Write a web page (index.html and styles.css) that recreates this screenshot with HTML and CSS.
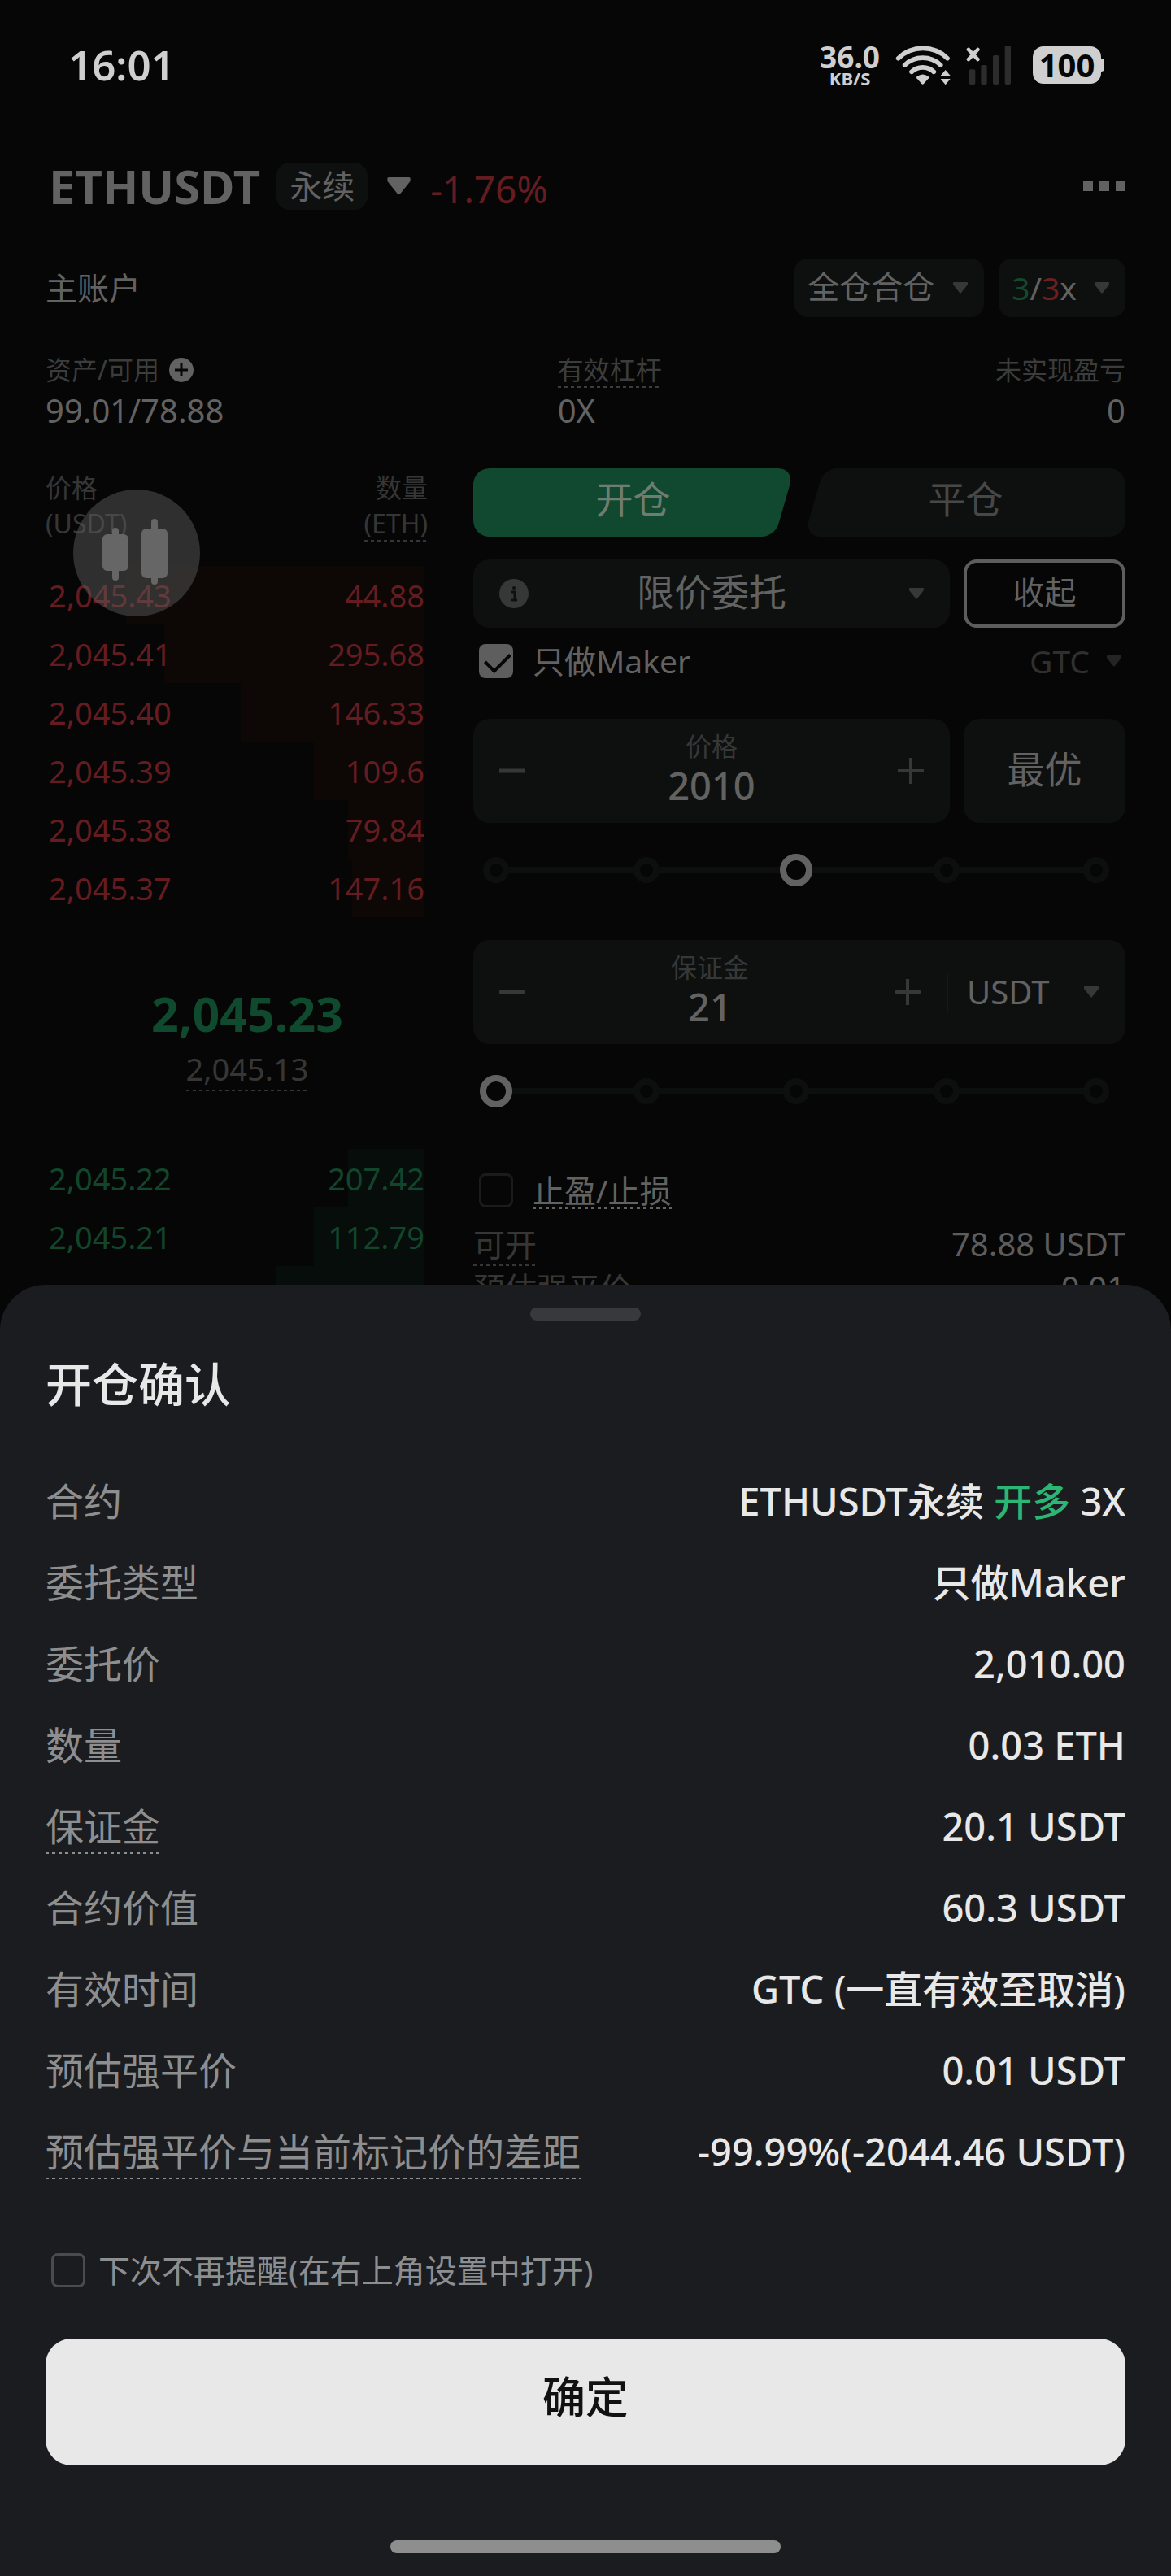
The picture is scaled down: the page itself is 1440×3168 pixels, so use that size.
FILE: index.html
```
<!DOCTYPE html>
<html lang="zh-CN">
<head>
    <meta charset="UTF-8">
    <meta name="viewport" content="width=device-width, initial-scale=1.0">
    <title>ETHUSDT 永续</title>
    <link rel="stylesheet" href="styles.css">
</head>
<body>
    <svg class="defs" aria-hidden="true">
        <symbol id="caret" viewBox="0 0 18 14">
            <path d="M1 0H17Q18 0 18 1V3L10 13Q9 14 8 13L0 3V1Q0 0 1 0Z" fill="currentColor"/>
        </symbol>
        <symbol id="minus" viewBox="0 0 32 32">
            <path d="M0 16H32" stroke="currentColor" stroke-width="5"/>
        </symbol>
        <symbol id="plus" viewBox="0 0 32 32">
            <path d="M0 16H32M16 0V32" stroke="currentColor" stroke-width="4"/>
        </symbol>
    </svg>

    <div class="app">
        <main class="trade">
            <div class="status-bar">
                <span class="time">16:01</span>
                <div class="status-icons">
                    <div class="speed"><b>36.0</b><small>KB/S</small></div>
                    <svg class="wifi" viewBox="0 0 210 153" aria-hidden="true">
                        <g fill="none" stroke="currentColor" stroke-width="17" stroke-linecap="round">
                            <path d="M14 50A130 130 0 0 1 195 50"/>
                            <path d="M38 75A95 95 0 0 1 170 75"/>
                            <path d="M63 100A60 60 0 0 1 145 100"/>
                        </g>
                        <path d="M83 117Q104 102 125 117Q129 120 126 124L108 144Q104 148 100 144L82 124Q79 120 83 117Z" fill="currentColor"/>
                        <path d="M188 93L206 114H170ZM170 126H206L188 148Z" fill="currentColor"/>
                    </svg>
                    <svg class="signal" viewBox="0 0 168 150" aria-hidden="true">
                        <path d="M9 18L43 54M43 18L9 54" stroke="currentColor" stroke-width="14" stroke-linecap="round"/>
                        <g fill="#2c2c2c">
                            <rect x="11" y="91" width="23" height="56" rx="6"/>
                            <rect x="55" y="75" width="22" height="72" rx="6"/>
                            <rect x="99" y="39" width="22" height="108" rx="6"/>
                            <rect x="143" y="3" width="22" height="144" rx="6"/>
                        </g>
                    </svg>
                    <div class="battery">100</div>
                </div>
            </div>

            <header class="pair">
                <h1>ETHUSDT</h1>
                <span class="tag">永续</span>
                <svg class="pair-caret" aria-hidden="true"><use href="#caret"/></svg>
                <span class="change">-1.76%</span>
                <button class="more" type="button" aria-label="更多"><i></i><i></i><i></i></button>
            </header>

            <section class="account">
                <span>主账户</span>
                <div class="chips">
                    <label class="chip">
                        <select aria-label="保证金模式"><option>全仓合仓</option></select>
                        <svg class="caret" aria-hidden="true"><use href="#caret"/></svg>
                    </label>
                    <button class="chip" type="button">
                        <span><span class="long">3</span>/<span class="short">3</span>x</span>
                        <svg class="caret" aria-hidden="true"><use href="#caret"/></svg>
                    </button>
                </div>
            </section>

            <section class="stats">
                <div>
                    <div class="stat-label">资产/可用
                        <svg class="add" viewBox="0 0 30 30" aria-hidden="true">
                            <circle cx="15" cy="15" r="15" fill="#626262"/>
                            <path d="M7 15H23M15 7V23" stroke="#060606" stroke-width="3"/>
                        </svg>
                    </div>
                    <div class="stat-value">99.01/78.88</div>
                </div>
                <div>
                    <div class="stat-label"><span class="dashed">有效杠杆</span></div>
                    <div class="stat-value">0X</div>
                </div>
                <div class="right">
                    <div class="stat-label">未实现盈亏</div>
                    <div class="stat-value">0</div>
                </div>
            </section>

            <div class="columns">
                <section class="book">
                    <table class="asks">
                        <thead>
                            <tr><th>价格<br>(USDT)</th><th>数量<br><span class="dashed">(ETH)</span></th></tr>
                        </thead>
                        <tbody>
                            <tr style="--depth: 78%"><td>2,045.43</td><td>44.88</td></tr>
                            <tr style="--depth: 68%"><td>2,045.41</td><td>295.68</td></tr>
                            <tr style="--depth: 48%"><td>2,045.40</td><td>146.33</td></tr>
                            <tr style="--depth: 29%"><td>2,045.39</td><td>109.6</td></tr>
                            <tr style="--depth: 20%"><td>2,045.38</td><td>79.84</td></tr>
                            <tr style="--depth: 19%"><td>2,045.37</td><td>147.16</td></tr>
                        </tbody>
                    </table>
                    <div class="last">
                        <strong>2,045.23</strong>
                        <span class="dashed">2,045.13</span>
                    </div>
                    <table class="bids">
                        <tbody>
                            <tr style="--depth: 20%"><td>2,045.22</td><td>207.42</td></tr>
                            <tr style="--depth: 29%"><td>2,045.21</td><td>112.79</td></tr>
                            <tr style="--depth: 39%"><td>2,045.20</td><td>140.44</td></tr>
                        </tbody>
                    </table>
                    <button class="chart-button" type="button" aria-label="K线">
                        <svg viewBox="0 0 156 156" aria-hidden="true">
                            <g fill="#666">
                                <rect x="36" y="55" width="32" height="45" rx="6"/>
                                <rect x="48" y="47" width="8" height="65" rx="4"/>
                                <rect x="84" y="48" width="32" height="61" rx="6"/>
                                <rect x="96" y="36" width="8" height="81" rx="4"/>
                            </g>
                        </svg>
                    </button>
                </section>

                <form class="order">
                    <div class="tabs">
                        <button class="tab open" type="button">开仓</button>
                        <button class="tab close" type="button">平仓</button>
                    </div>

                    <div class="row type-row">
                        <label class="field type">
                            <svg class="info" viewBox="0 0 36 36" aria-hidden="true">
                                <circle cx="18" cy="18" r="18" fill="#363837"/>
                                <circle cx="18" cy="11" r="2" fill="#0e100f"/>
                                <path d="M15 16H19V26M15 26H22" fill="none" stroke="#0e100f" stroke-width="3"/>
                            </svg>
                            <select aria-label="委托类型"><option>限价委托</option></select>
                            <svg class="caret" aria-hidden="true"><use href="#caret"/></svg>
                        </label>
                        <button class="fold" type="button">收起</button>
                    </div>

                    <div class="check-row">
                        <input type="checkbox" id="maker" checked>
                        <label for="maker">只做Maker</label>
                        <label class="tif">
                            <select aria-label="有效时间"><option>GTC</option></select>
                            <svg class="caret" aria-hidden="true"><use href="#caret"/></svg>
                        </label>
                    </div>

                    <div class="row amount-row">
                        <div class="field amount">
                            <button type="button" aria-label="减少价格"><svg><use href="#minus"/></svg></button>
                            <div class="amount-text">
                                <label for="price">价格</label>
                                <input type="text" id="price" value="2010">
                            </div>
                            <button type="button" aria-label="增加价格"><svg><use href="#plus"/></svg></button>
                        </div>
                        <button class="field best" type="button">最优</button>
                    </div>
                    <div class="slider">
                        <i></i><i></i><i></i><i></i><i></i>
                        <input type="range" min="0" max="100" value="50" aria-label="价格比例">
                    </div>

                    <div class="field margin">
                        <div class="amount">
                            <button type="button" aria-label="减少保证金"><svg><use href="#minus"/></svg></button>
                            <div class="amount-text">
                                <label for="margin">保证金</label>
                                <input type="text" id="margin" value="21">
                            </div>
                            <button type="button" aria-label="增加保证金"><svg><use href="#plus"/></svg></button>
                        </div>
                        <label class="unit">
                            <select aria-label="单位"><option>USDT</option></select>
                            <svg class="caret" aria-hidden="true"><use href="#caret"/></svg>
                        </label>
                    </div>
                    <div class="slider">
                        <i></i><i></i><i></i><i></i><i></i>
                        <input type="range" min="0" max="100" value="0" aria-label="保证金比例">
                    </div>

                    <div class="check-row tpsl">
                        <input type="checkbox" id="tpsl">
                        <label for="tpsl" class="dashed">止盈/止损</label>
                    </div>
                    <div class="info-row"><span class="dashed">可开</span><b>78.88 USDT</b></div>
                    <div class="info-row"><span class="dashed">预估强平价</span><b>0.01</b></div>
                </form>
            </div>
        </main>

        <section class="sheet" role="dialog" aria-labelledby="sheet-title">
            <div class="handle"></div>
            <h2 id="sheet-title">开仓确认</h2>
            <dl>
                <div><dt>合约</dt><dd>ETHUSDT永续 <span class="buy">开多</span> 3X</dd></div>
                <div><dt>委托类型</dt><dd>只做Maker</dd></div>
                <div><dt>委托价</dt><dd>2,010.00</dd></div>
                <div><dt>数量</dt><dd>0.03 ETH</dd></div>
                <div><dt class="dashed">保证金</dt><dd>20.1 USDT</dd></div>
                <div><dt>合约价值</dt><dd>60.3 USDT</dd></div>
                <div><dt>有效时间</dt><dd>GTC (一直有效至取消)</dd></div>
                <div><dt>预估强平价</dt><dd>0.01 USDT</dd></div>
                <div><dt class="dashed">预估强平价与当前标记价的差距</dt><dd>-99.99%(-2044.46 USDT)</dd></div>
            </dl>
            <div class="remind">
                <input type="checkbox" id="remind">
                <label for="remind">下次不再提醒(在右上角设置中打开)</label>
            </div>
            <button class="confirm" type="button">确定</button>
            <div class="home-bar"></div>
        </section>
    </div>
</body>
</html>
```

FILE: styles.css
```
* {
    box-sizing: border-box;
}

body {
    margin: 0;
    background: #060606;
    color: #626262;
    font-family: "Noto Sans", "Noto Sans CJK SC", sans-serif;
    font-size: 39px;
    line-height: 1.2;
}

button,
input,
select {
    margin: 0;
    padding: 0;
    border: 0;
    background: none;
    color: inherit;
    font: inherit;
    appearance: none;
    outline: none;
}

button,
select {
    cursor: pointer;
}

svg {
    display: block;
    flex: none;
}

.defs {
    display: none;
}

/* the sheet shares one grid cell with the trade screen and sits on its bottom edge */
.app {
    display: grid;
    grid-template-columns: 100%;
    min-height: 100vh;
}

.trade,
.sheet {
    grid-area: 1 / 1;
}

.trade {
    padding: 0 56px;
}

.caret {
    width: 18px;
    height: 14px;
    color: #363837;
}

.dashed {
    background: repeating-linear-gradient(90deg, currentColor 0 4px, transparent 4px 8px) left bottom / 100% 2px no-repeat;
}

.long {
    color: #12492f;
}

.short {
    color: #6e1f1f;
}

.right {
    text-align: right;
}

/* Status bar */
.status-bar {
    display: flex;
    align-items: center;
    justify-content: space-between;
    height: 160px;
    padding: 0 26px 0 28px;
    color: #cfcfcf;
}

.time {
    font-size: 51px;
    font-weight: 600;
}

.status-icons {
    display: flex;
    align-items: center;
    gap: 18px;
}

.speed {
    text-align: center;
}

.speed b,
.speed small {
    display: block;
    font-weight: 700;
}

.speed b {
    font-size: 37px;
    line-height: 32px;
}

.speed small {
    font-size: 22px;
    line-height: 20px;
}

.wifi {
    width: 70px;
    height: 51px;
}

.signal {
    width: 56px;
    height: 50px;
}

.battery {
    position: relative;
    margin: 0 4px 0 8px;
    width: 84px;
    height: 46px;
    border-radius: 13px;
    background: #cfcfcf;
    color: #060606;
    font-size: 40px;
    font-weight: 700;
    line-height: 46px;
    text-align: center;
}

.battery::after {
    content: "";
    position: absolute;
    left: 100%;
    top: 15px;
    width: 4px;
    height: 16px;
    border-radius: 0 4px 4px 0;
    background: #cfcfcf;
}

/* Pair header */
.pair {
    display: flex;
    align-items: center;
    height: 72px;
    margin-top: 33px;
    padding-left: 4px;
}

.pair h1 {
    margin: 0;
    font-size: 58px;
    font-weight: 700;
    line-height: 72px;
}

.tag {
    margin-left: 20px;
    padding: 0 16px;
    border-radius: 16px;
    background: #0e100f;
    font-size: 40px;
    line-height: 58px;
}

.pair-caret {
    width: 29px;
    height: 22px;
    margin: 0 24px;
}

.change {
    padding-top: 8px;
    color: #651c20;
    font-size: 46px;
}

.more {
    display: flex;
    gap: 8px;
    margin-left: auto;
    padding: 16px 0;
}

.more i {
    width: 12px;
    height: 12px;
    background: #626262;
}

/* Account */
.account {
    display: flex;
    align-items: center;
    justify-content: space-between;
    margin-top: 53px;
}

.chips {
    display: flex;
    gap: 18px;
}

.chip {
    display: flex;
    align-items: center;
    gap: 22px;
    height: 72px;
    padding: 0 20px 0 16px;
    border-radius: 16px;
    background: #0e100f;
}

.chip select {
    padding-bottom: 4px;
}

.stats {
    display: flex;
    justify-content: space-between;
    margin-top: 43px;
}

.stat-label {
    display: flex;
    align-items: center;
    gap: 12px;
    color: #3b3d3c;
    font-size: 32px;
    line-height: 44px;
}

.add {
    width: 30px;
    height: 30px;
}

.stat-value {
    font-size: 40px;
    line-height: 56px;
}

/* Order book */
.columns {
    display: grid;
    grid-template-columns: 496fr 802fr;
    gap: 30px;
    margin-top: 43px;
}

.book {
    position: relative;
    font-size: 38px;
}

.book table {
    width: calc(100% - 26px);
    border-spacing: 0;
}

.book th {
    padding: 2px 0 30px;
    color: #363636;
    font-size: 32px;
    font-weight: 400;
    line-height: 44px;
    text-align: left;
}

.book th .dashed {
    display: inline-block;
}

.book td {
    height: 72px;
    padding: 2px 4px 0;
}

.book th:last-child,
.book td:last-child {
    text-align: right;
}

.book tbody tr {
    background: linear-gradient(var(--bar), var(--bar)) right 4px top / var(--depth) 100% no-repeat;
}

.asks {
    --bar: #0d0706;
}

.asks td {
    color: #651c20;
}

.bids {
    --bar: #060d0a;
}

.bids td {
    color: #12462c;
}

.last {
    display: flex;
    flex-direction: column;
    align-items: center;
    gap: 4px;
    padding: 82px 0 71px;
}

.last strong {
    color: #104a2e;
    font-size: 59px;
    font-weight: 700;
    line-height: 72px;
}

.last .dashed {
    color: #363636;
    line-height: 56px;
}

.chart-button {
    position: absolute;
    left: 34px;
    top: 26px;
    width: 156px;
    height: 156px;
    border-radius: 50%;
    background: rgba(92, 92, 92, 0.48);
}

/* Order form */
.tabs {
    display: flex;
    gap: 16px;
}

.tab {
    position: relative;
    z-index: 0;
    flex: 1;
    height: 84px;
    padding-bottom: 8px;
    font-size: 46px;
}

/* a straight outer half plus a skewed inner part */
.tab::before,
.tab::after {
    content: "";
    position: absolute;
    z-index: -1;
    top: 0;
    bottom: 0;
    background: var(--tab);
}

.open {
    --tab: #10492f;
    color: #6f7c70;
}

.open::before {
    left: 0;
    right: 50%;
    border-radius: 20px 0 0 20px;
}

.open::after {
    left: 40px;
    right: 10px;
    border-radius: 0 20px 16px 0;
    transform: skewX(-16deg);
}

.close {
    --tab: #0e100f;
    color: #464847;
}

.close::before {
    left: 50%;
    right: 0;
    border-radius: 0 20px 20px 0;
}

.close::after {
    left: 10px;
    right: 40px;
    border-radius: 16px 0 0 20px;
    transform: skewX(-16deg);
}

.row {
    display: grid;
    grid-template-columns: 586fr 199fr;
    gap: 17px;
}

.field {
    border-radius: 20px;
    background: #0e100f;
}

.type-row {
    margin-top: 28px;
}

.type {
    display: flex;
    align-items: center;
    padding: 0 32px;
    height: 84px;
    font-size: 46px;
}

.type select {
    flex: 1;
    padding-bottom: 4px;
    text-align: center;
    text-align-last: center;
}

.type .caret {
    margin-left: 18px;
}

.info {
    width: 36px;
    height: 36px;
}

.fold {
    padding-bottom: 4px;
    border: 4px solid #5c5e5d;
    border-radius: 16px;
}

.check-row {
    display: flex;
    align-items: center;
    gap: 24px;
    height: 42px;
    margin-top: 20px;
    padding-left: 7px;
}

input[type="checkbox"] {
    flex: none;
    width: 42px;
    height: 42px;
    border: 3px solid #1b1b1b;
    border-radius: 8px;
}

input[type="checkbox"]:checked {
    border: 0;
    background: #5e5e5e;
}

input[type="checkbox"]:checked::before {
    content: "";
    display: block;
    width: 26px;
    height: 14px;
    margin: 10px 8px;
    border: solid #060606;
    border-width: 0 0 4px 4px;
    transform: rotate(-45deg);
}

.tif {
    display: flex;
    align-items: center;
    gap: 21px;
    margin-left: auto;
    padding-right: 5px;
    color: #2f2f2f;
}

.tif .caret {
    color: #242424;
}

.amount-row {
    margin-top: 50px;
}

.amount {
    display: flex;
    flex: 1;
    align-items: center;
    padding: 0 32px;
    min-width: 0;
}

.amount button {
    color: #363837;
}

.amount svg {
    width: 32px;
    height: 32px;
}

.amount-text {
    display: flex;
    flex: 1;
    flex-direction: column;
    align-items: center;
    min-width: 0;
    padding: 12px 0 20px;
}

.amount-text label {
    color: #363837;
    font-size: 32px;
    line-height: 44px;
}

.amount-text input {
    width: 100%;
    height: 52px;
    font-size: 47px;
    font-weight: 500;
    text-align: center;
}

.best {
    padding-bottom: 4px;
    font-size: 46px;
}

.margin {
    display: flex;
    margin-top: 66px;
}

.unit {
    display: flex;
    flex: none;
    align-items: center;
    gap: 42px;
    align-self: center;
    padding: 0 33px 0 23px;
    border-left: 2px solid #161817;
    font-size: 40px;
    line-height: 48px;
}

.slider {
    position: relative;
    display: flex;
    align-items: center;
    justify-content: space-between;
    height: 40px;
    margin: 38px 16px 0 8px;
    padding: 0 4px;
    background: linear-gradient(#0d0f0e, #0d0f0e) center / calc(100% - 60px) 8px no-repeat;
}

.slider i {
    width: 32px;
    height: 32px;
    border: 8px solid #0d0f0e;
    border-radius: 50%;
    background: #060606;
}

.slider input {
    position: absolute;
    inset: 0;
    width: 100%;
    height: 40px;
}

.slider input::-webkit-slider-thumb {
    appearance: none;
    width: 40px;
    height: 40px;
    border: 8px solid #626262;
    border-radius: 50%;
    background: #060606;
}

.tpsl {
    margin-top: 81px;
}

.tpsl label {
    line-height: 46px;
}

.info-row {
    display: flex;
    justify-content: space-between;
    color: #363636;
    line-height: 54px;
}

.tpsl + .info-row {
    margin-top: 18px;
}

.info-row b {
    color: #5c5c5c;
    font-size: 40px;
    font-weight: 400;
}

/* Confirm sheet */
.sheet {
    position: relative;
    align-self: end;
    padding: 28px 56px;
    border-radius: 56px 56px 0 0;
    background: #1b1c1f;
    color: #e8e8e8;
}

.handle {
    width: 136px;
    height: 16px;
    margin: 0 auto;
    border-radius: 8px;
    background: #38393c;
}

.sheet h2 {
    margin: 38px 0 54px;
    font-size: 57px;
    font-weight: 500;
    line-height: 80px;
}

.sheet dl {
    margin: 0;
    font-size: 47px;
}

.sheet dl div {
    display: flex;
    align-items: center;
    justify-content: space-between;
    height: 100px;
}

.sheet dt {
    color: #8d8e90;
    line-height: 68px;
}

.sheet dd {
    margin: 0;
    font-weight: 500;
}

.buy {
    color: #2bb673;
}

.remind {
    display: flex;
    align-items: center;
    gap: 16px;
    margin-top: 75px;
    padding-left: 7px;
    color: #8d8e90;
    line-height: 42px;
}

.remind input[type="checkbox"] {
    border-color: #4a4b4d;
}

.confirm {
    display: block;
    width: 100%;
    height: 156px;
    margin-top: 63px;
    padding-bottom: 12px;
    border-radius: 32px;
    background: #e8e8e8;
    color: #111;
    font-size: 53px;
    font-weight: 500;
}

.home-bar {
    width: 480px;
    max-width: 60%;
    height: 16px;
    margin: 92px auto 0;
    border-radius: 8px;
    background: #8e8e8f;
}
```
